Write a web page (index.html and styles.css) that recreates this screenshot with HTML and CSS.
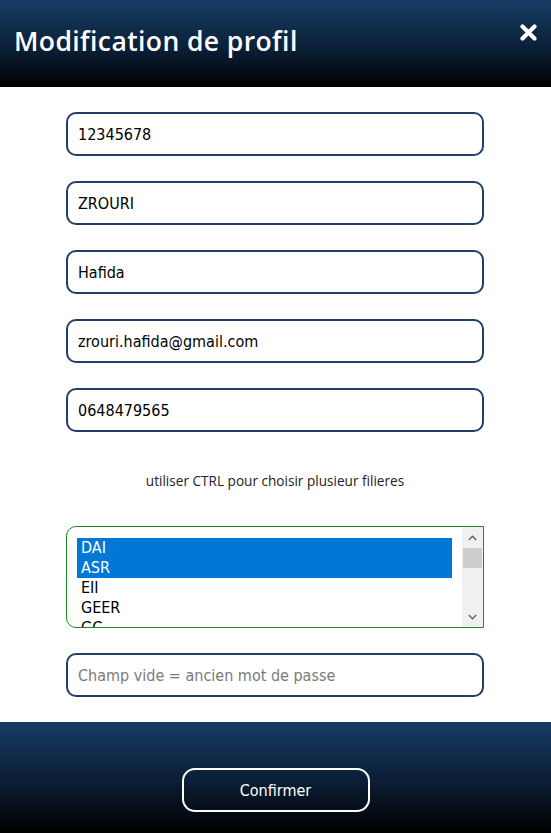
FILE: index.html
```html
<!DOCTYPE html>
<html lang="fr">
<head>
<meta charset="utf-8">
<title>Modification de profil</title>
<link rel="stylesheet" href="styles.css">
</head>
<body>
<div class="modal">
  <header class="modal-header">
    <h1 class="title">Modification de profil</h1>
    <button class="close" aria-label="Fermer">
      <svg width="17" height="17" viewBox="0 0 17 17"><path d="M2.5 2.5 L14.5 14.5 M14.5 2.5 L2.5 14.5" stroke="#fff" stroke-width="4.2" stroke-linecap="round"/></svg>
    </button>
  </header>
  <main class="modal-body">
    <input class="field" type="text" value="12345678">
    <input class="field" type="text" value="ZROURI">
    <input class="field" type="text" value="Hafida">
    <input class="field" type="text" value="zrouri.hafida@gmail.com">
    <input class="field" type="text" value="0648479565">
    <p class="hint">utiliser CTRL pour choisir plusieur filieres</p>
    <div class="listbox">
      <div class="options">
        <div class="option selected">DAI</div>
        <div class="option selected">ASR</div>
        <div class="option">EII</div>
        <div class="option">GEER</div>
        <div class="option">GC</div>
      </div>
      <div class="scrollbar">
        <div class="arrow">
          <svg width="9" height="6" viewBox="0 0 9 6"><path d="M0.8 5 L4.5 1.2 L8.2 5" fill="none" stroke="#606060" stroke-width="1.3"/></svg>
        </div>
        <div class="track"><div class="thumb"></div></div>
        <div class="arrow">
          <svg width="9" height="6" viewBox="0 0 9 6"><path d="M0.8 1 L4.5 4.8 L8.2 1" fill="none" stroke="#606060" stroke-width="1.3"/></svg>
        </div>
      </div>
    </div>
    <input class="field password" type="password" placeholder="Champ vide = ancien mot de passe">
  </main>
  <footer class="modal-footer">
    <button class="confirm">Confirmer</button>
  </footer>
</div>
</body>
</html>
```
FILE: styles.css
```css
html, body {
  margin: 0;
  padding: 0;
  background: #fff;
}
body {
  width: 551px;
  height: 833px;
  overflow: hidden;
  font-family: "DejaVu Sans Condensed", "DejaVu Sans", sans-serif;
}
.modal {
  display: flex;
  flex-direction: column;
  height: 833px;
}
.modal-header {
  height: 87px;
  background: linear-gradient(to bottom, #163c65 0%, #0b2038 55%, #000 100%);
  display: flex;
  justify-content: space-between;
  align-items: flex-start;
  padding: 0 14px 0 14px;
  box-sizing: border-box;
}
.title {
  margin: 23px 0 0 0;
  color: #fff;
  font-family: "Open Sans", sans-serif;
  font-weight: 600;
  font-size: 26.5px;
  line-height: 36px;
  letter-spacing: 0.4px;
}
.close {
  background: none;
  border: 0;
  padding: 0;
  margin: 24px 0 0 0;
  width: 17px;
  height: 17px;
  line-height: 0;
}
.modal-body {
  flex: 1;
  display: flex;
  flex-direction: column;
  align-items: flex-start;
  padding: 25px 0 0 66px;
  box-sizing: border-box;
}
.field {
  display: block;
  width: 418px;
  height: 44px;
  box-sizing: border-box;
  border: 2px solid #1f3f66;
  border-radius: 10px;
  padding: 0 10px;
  margin: 0 0 25px 0;
  font-family: "DejaVu Sans Condensed", "DejaVu Sans", sans-serif;
  font-size: 16px;
  color: #000;
  background: #fff;
  outline: none;
}
.field::placeholder {
  color: #7a7a7a;
}
.hint {
  margin: 14px 0 0 0;
  width: 418px;
  height: 55px;
  font-family: "Open Sans", sans-serif;
  font-size: 13.6px;
  color: #222;
  text-align: center;
}
.listbox {
  width: 418px;
  height: 102px;
  box-sizing: border-box;
  border: 1px solid #1d8a1d;
  border-radius: 10px 0 0 10px;
  display: flex;
  overflow: hidden;
  margin-bottom: 25px;
}
.options {
  flex: 1;
  padding: 11px 10px 0 10px;
  overflow: hidden;
}
.option {
  height: 20px;
  line-height: 20px;
  padding-left: 4px;
  font-family: "DejaVu Sans Condensed", "DejaVu Sans", sans-serif;
  font-size: 16px;
  color: #000;
}
.option.selected {
  background: #0078d7;
  color: #fff;
}
.scrollbar {
  width: 21px;
  background: #f0f0f0;
  display: flex;
  flex-direction: column;
}
.arrow {
  height: 21px;
  display: flex;
  align-items: center;
  justify-content: center;
}
.track {
  flex: 1;
  padding: 0 1px;
}
.thumb {
  height: 20px;
  background: #cdcdcd;
}
.modal-footer {
  height: 111px;
  background: linear-gradient(to bottom, #163c65 0%, #0b2038 50%, #000 100%);
  display: flex;
  justify-content: center;
  align-items: flex-start;
  padding-top: 46px;
  box-sizing: border-box;
}
.confirm {
  width: 188px;
  height: 44px;
  border: 2px solid #fff;
  border-radius: 13px;
  background: transparent;
  color: #fff;
  font-family: "DejaVu Sans Condensed", "DejaVu Sans", sans-serif;
  font-size: 16px;
}
```
